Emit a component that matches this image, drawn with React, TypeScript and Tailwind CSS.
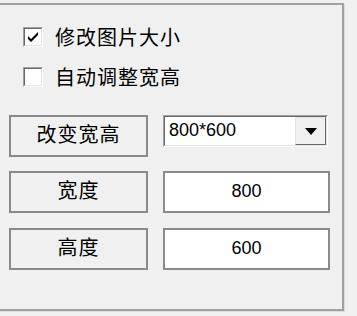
import React from "react";

const cjk = { fontFamily: '"Noto Sans CJK SC", "Microsoft YaHei", sans-serif' };
const lat = { fontFamily: '"Liberation Sans", Arial, sans-serif' };

function CheckBox({ checked, label }: { checked: boolean; label: string }) {
  return (
    <div className="flex items-center h-[20px]">
      <div className="w-[20px] h-[20px] border border-t-[#a0a0a0] border-l-[#a0a0a0] border-b-white border-r-white">
        <div className="w-full h-full bg-white border border-t-[#696969] border-l-[#696969] border-b-[#e3e3e3] border-r-[#e3e3e3] flex items-center justify-center">
          {checked && (
            <svg width="14" height="14" viewBox="0 0 14 14">
              <path d="M2 6 L5 9 L12 2 L12 5 L5 12 L2 9 Z" fill="#000" />
            </svg>
          )}
        </div>
      </div>
      <span className="ml-[12px] text-[20px] leading-none text-black tracking-[1px]" style={cjk}>
        {label}
      </span>
    </div>
  );
}

function Btn({ label }: { label: string }) {
  return (
    <div
      className="w-[139px] h-[42px] border-2 border-[#8a8a8a] bg-[#f0f0f0] flex items-center justify-center text-[20px] leading-none text-black tracking-[1px]"
      style={cjk}
    >
      <span className="-mt-[4px]">{label}</span>
    </div>
  );
}

function TextBox({ value }: { value: string }) {
  return (
    <div
      className="w-[167px] h-[42px] border-2 border-[#8a8a8a] bg-white flex items-center justify-center text-[18px] leading-none text-black"
      style={lat}
    >
      <span className="-mt-[3px]">{value}</span>
    </div>
  );
}

export default function App() {
  return (
    <div className="w-[357px] h-[316px] bg-[#f0f0f0] overflow-hidden">
      <div className="mt-[3px] ml-[-4px] w-[348px] h-[308px] border-2 border-[#a0a0a0] shadow-[1px_1px_0_#dcdcdc]">
        <div className="flex flex-col pl-[11px] pt-[22px]">
          <div className="pl-[14px] flex flex-col gap-[20px]">
            <CheckBox checked label="修改图片大小" />
            <CheckBox checked={false} label="自动调整宽高" />
          </div>
          <div className="mt-[28px] flex gap-[15px]">
            <Btn label="改变宽高" />
            <div className="w-[165px] h-[32px] border border-t-[#a0a0a0] border-l-[#a0a0a0] border-b-white border-r-white">
              <div className="w-full h-full bg-white border border-t-[#696969] border-l-[#696969] border-b-[#e3e3e3] border-r-[#e3e3e3] flex items-center">
                <span className="flex-1 pl-[4px] text-[18px] leading-none text-black -mt-[2px]" style={lat}>
                  800*600
                </span>
                <div className="w-[31px] h-full bg-[#f0f0f0] border border-t-[#e3e3e3] border-l-[#e3e3e3] border-b-[#696969] border-r-[#696969] flex items-center justify-center">
                  <svg width="12" height="7" viewBox="0 0 12 7">
                    <path d="M0 0 L12 0 L6 7 Z" fill="#000" />
                  </svg>
                </div>
              </div>
            </div>
          </div>
          <div className="mt-[14px] flex gap-[15px]">
            <Btn label="宽度" />
            <TextBox value="800" />
          </div>
          <div className="mt-[15px] flex gap-[15px]">
            <Btn label="高度" />
            <TextBox value="600" />
          </div>
        </div>
      </div>
    </div>
  );
}
